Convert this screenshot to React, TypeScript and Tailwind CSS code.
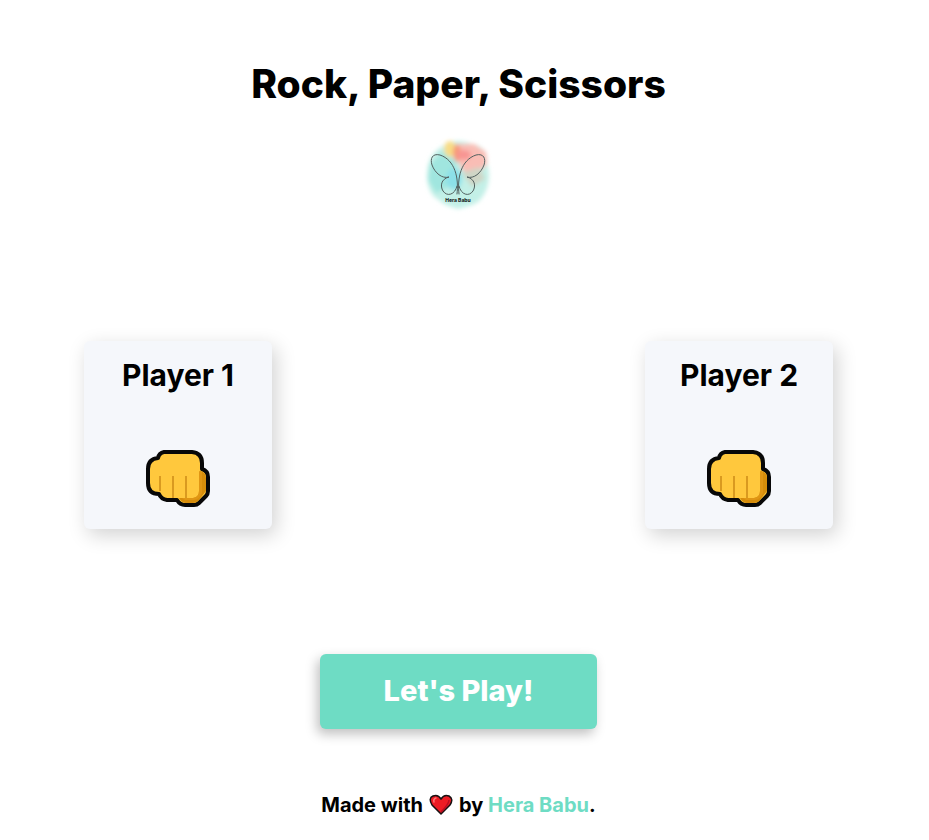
import { useId } from "react";

function ButterflyLogo() {
  const id = useId();
  const blur = `${id}-blur`;
  return (
    <svg viewBox="0 0 90 90" className="h-[90px] w-[90px]" role="img" aria-label="Hera Babu logo">
      <defs>
        <filter id={blur} x="-30%" y="-30%" width="160%" height="160%">
          <feGaussianBlur stdDeviation="2" />
        </filter>
      </defs>
      <g filter={`url(#${blur})`}>
        <path d="M15 33C18 22 25 19 32 14C42 9 50 11 58 14C68 15 74 23 73 33C77 46 75 60 66 70C60 76 50 77 44 79C38 77 31 76 25 70C13 64 11 46 15 33Z" fill="#c3f0e7" />
        <path d="M16 34L28 22L42 32L40 54L22 63L14 50Z" fill="#a0e6df" />
        <path d="M44 14L60 14L72 22L73 34L64 43L49 41L42 27Z" fill="#f9bdb5" />
        <path d="M48 43L65 37L71 49L58 57Z" fill="#cfd6c6" />
        <ellipse cx="40" cy="49" rx="8" ry="11" fill="#8ce0e8" />
        <ellipse cx="36" cy="19" rx="6" ry="8" fill="#f8dc86" />
        <ellipse cx="43" cy="23" rx="4" ry="9" fill="#f79a7c" />
        <ellipse cx="50" cy="25" rx="7" ry="5" fill="#f89593" />
      </g>
      <g fill="none" stroke="#52605f" strokeWidth="1" strokeLinecap="round">
        <path d="M43 64C45 48 41 30 26 25C18 23 16 29 18 35C21 43 28 49 35 47C27 49 26 56 29 61C33 67 41 65 43 56" />
        <path d="M45 64C43 48 47 30 62 25C70 23 72 29 70 35C67 43 60 49 53 47C61 49 62 56 59 61C55 67 47 65 45 56" />
      </g>
      <text x="44" y="72" textAnchor="middle" className="fill-[#202828] font-['Inter',sans-serif] text-[5px] font-extrabold">
        Hera Babu
      </text>
    </svg>
  );
}

function Fist() {
  return (
    <svg viewBox="0 0 66 60" className="h-[60px] w-[66px]" role="img" aria-label="Rock">
      <path
        d="M19 3H47Q57 4 57 14V20Q63 22 63 28V42Q63 45 61 47L54 54Q52 56 49 56H40Q35 56 32 51H22Q16 50 14 45Q3 45 3 34V20Q3 10 13 9Q14 4 19 3Z"
        fill="#ffc83d"
        stroke="#080808"
        strokeWidth="4"
        strokeLinejoin="round"
      />
      <path d="M55 22Q61 23 61 29V42L53 52Q51 54 48 54H40Q36 53 34 49H48Q54 48 54 42Z" fill="#d68d0b" />
      <path d="M54 22L57 23V44Q55 50 49 51H40L37 49H48Q54 48 54 42Z" fill="#e09614" />
      <path d="M15 27V42M28 27V49M41 27V49" stroke="#d99a20" strokeWidth="2" />
    </svg>
  );
}

function Heart() {
  return (
    <svg viewBox="0 0 24 22" className="mx-[6px] h-[22px] w-6" role="img" aria-label="love">
      <path d="M12 20L3 11Q-1 4 4 2Q9 0 12 5Q15 0 20 2Q25 5 21 11Z" fill="#ed1c24" stroke="#171112" strokeWidth="1.5" strokeLinejoin="round" />
      <path d="M5 8Q4 5 7 4" fill="none" stroke="#ff7777" strokeWidth="1.5" strokeLinecap="round" />
      <path d="M20 6Q20 10 12 18" fill="none" stroke="#b90f22" strokeWidth="1.5" />
    </svg>
  );
}

function PlayerCard({ name }: { name: string }) {
  return (
    <section className="flex h-[188px] w-[188px] flex-col items-center justify-between rounded-md bg-[#f5f7fb] pt-4 pb-5 shadow-[4px_6px_20px_rgba(0,0,0,0.18)]">
      <h2 className="text-[30px] leading-9 font-bold">{name}</h2>
      <Fist />
    </section>
  );
}

export default function App() {
  return (
    <div className="min-h-screen bg-white pr-3 font-['Inter',sans-serif] text-black">
      <header className="flex flex-col items-center pt-[60px]">
        <h1 className="text-center text-[39px] leading-[48px] font-extrabold">Rock, Paper, Scissors</h1>
        <div className="mt-[22px]">
          <ButterflyLogo />
        </div>
      </header>
      <main>
        <div className="mt-[121px] flex justify-between px-[84px]">
          <PlayerCard name="Player 1" />
          <PlayerCard name="Player 2" />
        </div>
        <div className="mt-[125px] flex justify-center">
          <button type="button" className="rounded-md bg-[#6edcc4] px-16 pt-[17px] pb-[19px] text-[29px] leading-[39px] font-extrabold text-white shadow-[-3px_5px_12px_rgba(0,0,0,0.25)]">
            Let's Play!
          </button>
        </div>
      </main>
      <footer className="mt-[62px] flex items-center justify-center text-[20px] leading-7 font-bold">
        <span>Made with</span>
        <Heart />
        <span>
          by <a href="#hera-babu" className="text-[#6edcc4]">Hera Babu</a>.
        </span>
      </footer>
    </div>
  );
}
